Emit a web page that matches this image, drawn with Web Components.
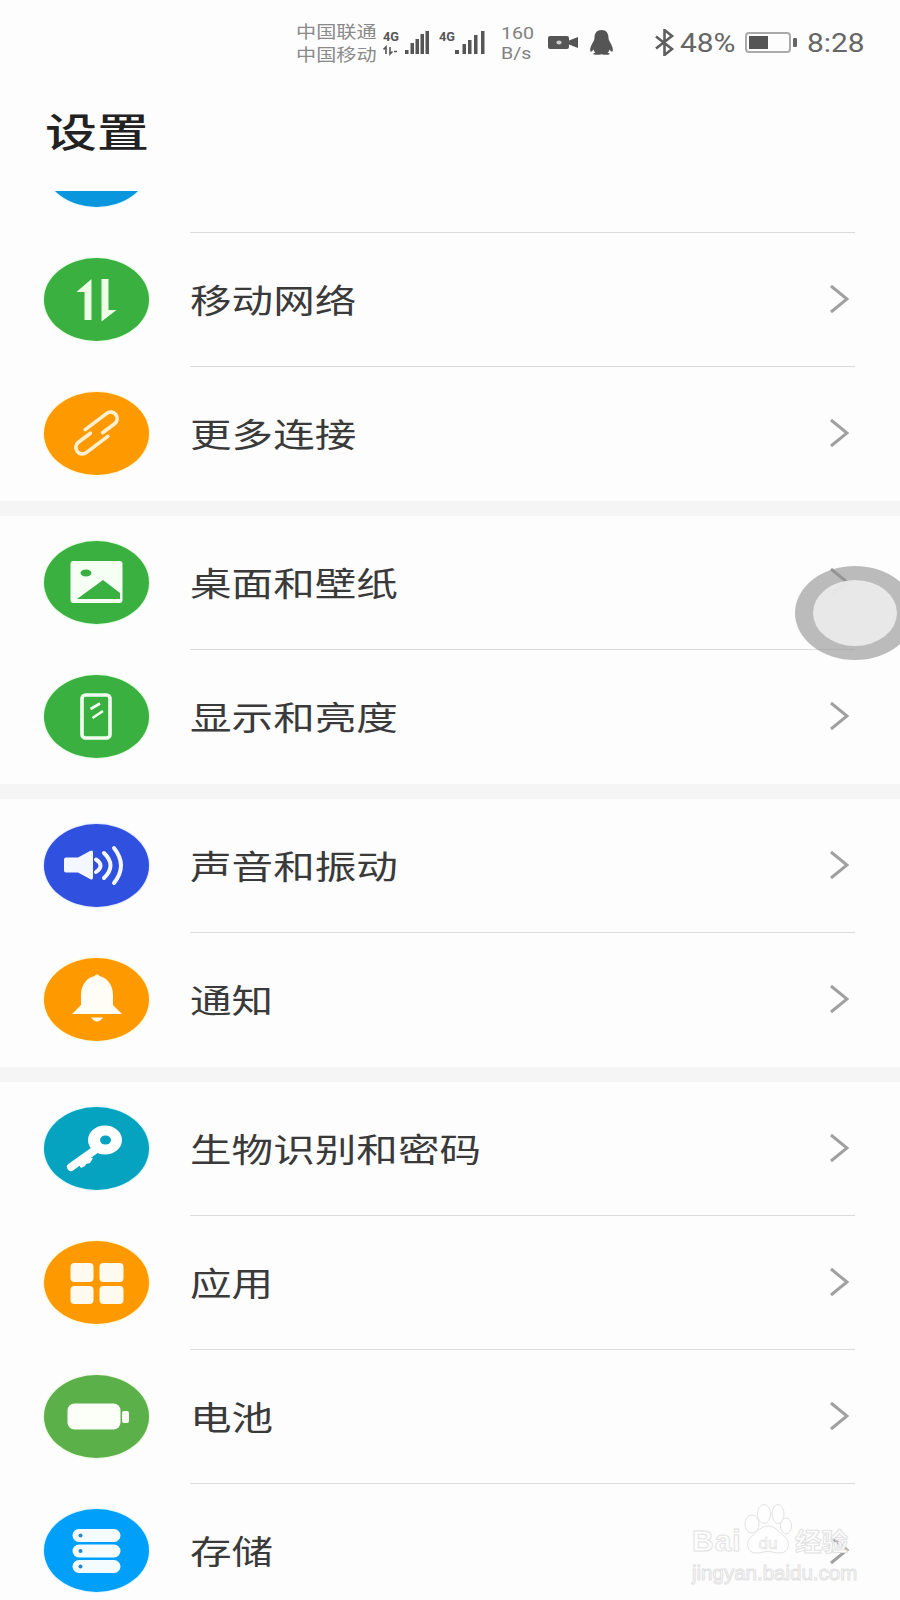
<!DOCTYPE html>
<html lang="zh">
<head>
<meta charset="utf-8">
<title>设置</title>
<style>
html, body { margin: 0; padding: 0; }
body {
    width: 900px;
    height: 1600px;
    overflow: hidden;
    position: relative;
    background: #fdfdfd;
    font-family: "Noto Sans CJK SC", "Noto Sans", sans-serif;
}
</style>
</head>
<body>

<status-bar></status-bar>
<title-bar>设置</title-bar>

<setting-list>
    <setting-group>
        <setting-row color="#0a96dc" halo="#9adfff" clipped></setting-row>
        <setting-row color="#39b040" halo="#b0f8a8">
            <svg slot="icon" width="105" height="83" viewBox="0 0 105 83" fill="#ecffe6">
                <path d="M47.5 21V62H40.5V34H32.5Z"/>
                <path d="M57.5 21H64.5V52H72.5L57.5 63.5Z"/>
            </svg>
            移动网络
        </setting-row>
        <setting-row color="#fe9a00" halo="#ffe680" last>
            <svg slot="icon" width="105" height="83" viewBox="0 0 105 83" fill="none" stroke="#fff0d2" stroke-width="3.6" stroke-linecap="round">
                <g transform="translate(52.5 41) rotate(-37)">
                    <path d="M-7 -9.5H20A6.5 6.5 0 0 1 20 3.5H5"/>
                    <path d="M7 9.5H-20A6.5 6.5 0 0 1 -20 -3.5H-5"/>
                </g>
            </svg>
            更多连接
        </setting-row>
    </setting-group>

    <setting-group>
        <setting-row color="#39b040" halo="#b0f8a8">
            <svg slot="icon" width="105" height="83" viewBox="0 0 105 83">
                <rect x="26.5" y="20" width="52" height="42" rx="3" fill="#f6fff4"/>
                <ellipse cx="42" cy="32" rx="5.5" ry="3.5" fill="#39b040"/>
                <path d="M33 58L59 39L76 52V58Z" fill="#39b040"/>
            </svg>
            桌面和壁纸
        </setting-row>
        <setting-row color="#39b040" halo="#b0f8a8" last>
            <svg slot="icon" width="105" height="83" viewBox="0 0 105 83" fill="none" stroke="#f2fff0">
                <rect x="38" y="20" width="28" height="43" rx="3.5" stroke-width="3.6"/>
                <path d="M46.5 34L56 28.5M48.5 43L59 36" stroke-width="2.6"/>
            </svg>
            显示和亮度
        </setting-row>
    </setting-group>

    <setting-group>
        <setting-row color="#3050e0" halo="#a8c0ff">
            <svg slot="icon" width="105" height="83" viewBox="0 0 105 83" fill="none" stroke="#f4f7ff">
                <path d="M22 33.5H34L46 27Q49 25.5 49 28.5V53.5Q49 56.5 46 55L34 48.5H22Q20 48.5 20 46.5V35.5Q20 33.5 22 33.5Z" fill="#f4f7ff" stroke="none"/>
                <path d="M52 35.5Q61 41.5 52 48M60 29Q73 41.5 60 54M70 24Q84 41.5 70 59" stroke-width="4" stroke-linecap="round"/>
            </svg>
            声音和振动
        </setting-row>
        <setting-row color="#fe9a00" halo="#ffe680" last>
            <svg slot="icon" width="105" height="83" viewBox="0 0 105 83" fill="#fffdf6">
                <circle cx="53" cy="19" r="2.5"/>
                <path d="M53 18C62 18 69 26 69 37V47L78 56H28L37 47V37C37 26 44 18 53 18Z"/>
                <path d="M47 59.5H59Q56 63.5 53 63.5Q50 63.5 47 59.5Z"/>
            </svg>
            通知
        </setting-row>
    </setting-group>

    <setting-group>
        <setting-row color="#05a3c0" halo="#9af0ff">
            <svg slot="icon" width="105" height="83" viewBox="0 0 105 83">
                <path d="M27 60L51 43" stroke="#fff" stroke-width="8" stroke-linecap="round"/>
                <path d="M35 58L37 61L41 59L42 57L46 56L49 51L43 50Z" fill="#fff"/>
                <ellipse cx="61" cy="33" rx="17" ry="14.5" fill="#fff"/>
                <ellipse cx="61.5" cy="33" rx="5.5" ry="4.5" fill="#05a3c0"/>
            </svg>
            生物识别和密码
        </setting-row>
        <setting-row color="#fe9a00" halo="#ffe680">
            <svg slot="icon" width="105" height="83" viewBox="0 0 105 83" fill="#fffaf0">
                <rect x="26.5" y="22" width="23" height="19" rx="4"/>
                <rect x="55.5" y="22" width="24" height="19" rx="4"/>
                <rect x="26.5" y="45" width="23" height="18" rx="4"/>
                <rect x="55.5" y="45" width="24" height="18" rx="4"/>
            </svg>
            应用
        </setting-row>
        <setting-row color="#5bb04a" halo="#c0f0a0">
            <svg slot="icon" width="105" height="83" viewBox="0 0 105 83" fill="#fbfff8">
                <rect x="23.5" y="28.5" width="53" height="26" rx="7"/>
                <rect x="78" y="36" width="7" height="12" rx="2"/>
            </svg>
            电池
        </setting-row>
        <setting-row color="#00a0fa" halo="#9ae8ff" last>
            <svg slot="icon" width="105" height="83" viewBox="0 0 105 83">
                <g fill="#f4fcff">
                    <rect x="28.5" y="20" width="48" height="13" rx="6.5"/>
                    <rect x="28.5" y="35.5" width="48" height="13" rx="6.5"/>
                    <rect x="28.5" y="51" width="48" height="13" rx="6.5"/>
                </g>
                <g fill="#2a86c8">
                    <circle cx="36.5" cy="26.5" r="2"/>
                    <circle cx="36.5" cy="42" r="2"/>
                    <circle cx="36.5" cy="57.5" r="2"/>
                </g>
            </svg>
            存储
        </setting-row>
    </setting-group>
</setting-list>

<floating-ball></floating-ball>
<baidu-mark></baidu-mark>

<script>
// status bar along the top
var template_status = document.createElement("template");
template_status.innerHTML = `
<style>
:host { display: flex; align-items: center; height: 85px; padding-left: 296px; color: #666; font-family: Roboto, "Noto Sans CJK SC", sans-serif; }
svg { display: block; flex: none; }
.wide { display: block; transform-origin: left center; white-space: nowrap; }
.two { flex: none; display: flex; flex-direction: column; }
.carrier { width: 81px; font: 16.5px/23px "Noto Sans CJK SC", sans-serif; color: #8a8a8a; }
.carrier .wide { transform: scaleX(1.22); }
.speed { width: 33px; margin-left: 15px; font-size: 17px; line-height: 20px; color: #808080; }
.speed .wide { transform: scaleX(1.15); }
.sig1 { margin-left: 6px; }
.sig2 { margin-left: 9px; }
.cam { margin-left: 14px; }
.qq { margin-left: 10px; }
.bt { margin-left: 39px; }
.pct { flex: none; width: 55px; margin-left: 5px; font-size: 26px; }
.pct .wide, .time .wide { transform: scaleX(1.15); }
.batt { margin-left: 10px; }
.time { flex: none; width: 58px; margin-left: 10px; font-size: 26px; }
</style>
<div class="two carrier"><span class="wide">中国联通</span><span class="wide">中国移动</span></div>
<svg class="sig1" width="47" height="26" viewBox="0 0 47 26" fill="#555">
    <text x="0" y="11" font-family="Roboto, sans-serif" font-size="12.5" font-weight="700" textLength="16" lengthAdjust="spacingAndGlyphs">4G</text>
    <path d="M3 24V17L.5 19.5M7 17V24L9.5 21.5M11 21.5H14" fill="none" stroke="#555" stroke-width="1.6"/>
    <rect x="22" y="20" width="3.5" height="4"/>
    <rect x="27.5" y="13" width="3.5" height="11"/>
    <rect x="32.5" y="9" width="3.5" height="15"/>
    <rect x="37.5" y="4" width="3.5" height="20"/>
    <rect x="42.5" y="1" width="3.5" height="23"/>
</svg>
<svg class="sig2" width="47" height="26" viewBox="0 0 47 26" fill="#555">
    <text x="0" y="11" font-family="Roboto, sans-serif" font-size="12.5" font-weight="700" textLength="16" lengthAdjust="spacingAndGlyphs">4G</text>
    <rect x="16" y="20" width="4" height="4"/>
    <rect x="23.5" y="14" width="3.5" height="10"/>
    <rect x="29" y="10" width="3.5" height="14"/>
    <rect x="35" y="5" width="3.5" height="19"/>
    <rect x="42" y="1" width="3.5" height="23"/>
</svg>
<div class="two speed"><span class="wide">160</span><span class="wide">B/s</span></div>
<svg class="cam" width="30" height="13" viewBox="0 0 30 13">
    <path d="M2 0H19Q21 0 21 2V4.5L30 1V12L21 8.5V11Q21 13 19 13H2Q0 13 0 11V2Q0 0 2 0Z" fill="#555"/>
    <ellipse cx="11" cy="6.5" rx="2.6" ry="2" fill="#ccc"/>
</svg>
<svg class="qq" width="27" height="25" viewBox="0 0 27 25">
    <path d="M13.5 0C8.5 0 6.5 3.5 6.5 8C6.5 10 5 12 4 14C2.5 17 1.5 20 2.5 21.5C3.5 22 4.5 21 5.5 19.5C6 21 6.5 22 7.5 22.5C5.5 23 4.5 24 6 24.5C8 25 11 25 13.5 24.2C16 25 19 25 21 24.5C22.5 24 21.5 23 19.5 22.5C20.5 22 21 21 21.5 19.5C22.5 21 23.5 22 24.5 21.5C25.5 20 24.5 17 23 14C22 12 20.5 10 20.5 8C20.5 3.5 18.5 0 13.5 0Z" fill="#555"/>
</svg>
<svg class="bt" width="21" height="27" viewBox="0 0 21 27" fill="none" stroke="#5f5f5f" stroke-width="2.6">
    <path d="M2 7.5L18 20L10.5 26V1L18 7L2 19.5"/>
</svg>
<div class="pct"><span class="wide">48%</span></div>
<svg class="batt" width="52" height="21" viewBox="0 0 52 21">
    <rect x="1" y="1" width="44" height="19" rx="3" fill="none" stroke="#aaa" stroke-width="2"/>
    <rect x="4" y="4" width="19" height="13" fill="#555"/>
    <rect x="48" y="6" width="4" height="9" rx="1" fill="#666"/>
</svg>
<div class="time"><span class="wide">8:28</span></div>
`;
class StatusBar extends HTMLElement {
    constructor(){
        super();
        this.attachShadow({mode:"open"});
    }
    connectedCallback(){
        this.shadowRoot.appendChild(template_status.content.cloneNode(true));
    }
}
customElements.define("status-bar", StatusBar);

// big page title
var template_title = document.createElement("template");
template_title.innerHTML = `
<style>
:host { display: flex; align-items: center; height: 90px; padding: 0 0 16px 45px; }
span { display: block; font-size: 40px; font-weight: 500; color: #222; transform: scaleX(1.3); transform-origin: left center; }
</style>
<span><slot></slot></span>
`;
class TitleBar extends HTMLElement {
    constructor(){
        super();
        this.attachShadow({mode:"open"});
    }
    connectedCallback(){
        this.shadowRoot.appendChild(template_title.content.cloneNode(true));
    }
}
customElements.define("title-bar", TitleBar);

// scrolled area, first row is cut off under the title
var template_list = document.createElement("template");
template_list.innerHTML = `
<style>
:host { display: block; height: 1409px; overflow: hidden; }
div { margin-top: -92.5px; }
</style>
<div><slot></slot></div>
`;
class SettingList extends HTMLElement {
    constructor(){
        super();
        this.attachShadow({mode:"open"});
    }
    connectedCallback(){
        this.shadowRoot.appendChild(template_list.content.cloneNode(true));
    }
}
customElements.define("setting-list", SettingList);

var template_group = document.createElement("template");
template_group.innerHTML = `
<style>
:host { display: block; border-bottom: 15px solid #f5f5f5; }
</style>
<slot></slot>
`;
class SettingGroup extends HTMLElement {
    constructor(){
        super();
        this.attachShadow({mode:"open"});
    }
    connectedCallback(){
        this.shadowRoot.appendChild(template_group.content.cloneNode(true));
    }
}
customElements.define("setting-group", SettingGroup);

// one row: coloured oval, label, chevron
var template_row = document.createElement("template");
template_row.innerHTML = `
<style>
:host { display: flex; align-items: stretch; height: 134px; padding-left: 44px; font-size: 33px; color: #3a3a3a; }
.icon { flex: none; align-self: center; width: 105px; height: 83px; border-radius: 50%; background: var(--oval); box-shadow: 0 0 2px var(--halo); }
.icon ::slotted(svg) { display: block; }
.body { flex: 1; display: flex; align-items: center; justify-content: space-between; margin: 0 45px 0 41px; padding-right: 6px; border-bottom: 1px solid #dcdcdc; }
:host([last]) .body { border-bottom-color: transparent; }
.label { display: block; white-space: nowrap; transform: scaleX(1.26); transform-origin: left center; }
svg.chev { display: block; }
:host([clipped]) svg.chev { display: none; }
</style>
<div class="icon"><slot name="icon"></slot></div>
<div class="body">
    <span class="label"><slot></slot></span>
    <svg class="chev" width="20" height="30" viewBox="0 0 20 30" fill="none" stroke="#a0a0a0" stroke-width="3">
        <path d="M2 2L18 15L2 28"/>
    </svg>
</div>
`;
class SettingRow extends HTMLElement {
    constructor(){
        super();
        this.attachShadow({mode:"open"});
    }
    connectedCallback(){
        this.shadowRoot.appendChild(template_row.content.cloneNode(true));
        this.style.setProperty("--oval", this.getAttribute("color"));
        this.style.setProperty("--halo", this.getAttribute("halo"));
    }
}
customElements.define("setting-row", SettingRow);

// assistive touch ball floating over the list
var template_ball = document.createElement("template");
template_ball.innerHTML = `
<style>
:host { display: flex; align-items: center; justify-content: center; position: absolute; left: 795px; top: 566px; width: 120px; height: 94px; border-radius: 50%; background: rgba(140,140,140,.58); }
div { width: 84px; height: 66px; border-radius: 50%; background: rgba(234,234,234,.95); }
</style>
<div></div>
`;
class FloatingBall extends HTMLElement {
    constructor(){
        super();
        this.attachShadow({mode:"open"});
    }
    connectedCallback(){
        this.shadowRoot.appendChild(template_ball.content.cloneNode(true));
    }
}
customElements.define("floating-ball", FloatingBall);

// outlined watermark, bottom right
var template_mark = document.createElement("template");
template_mark.innerHTML = `
<style>
:host { display: flex; flex-direction: column; position: absolute; left: 692px; top: 1504px; width: 160px; font-family: "Liberation Sans", sans-serif; color: #fefefe; -webkit-text-stroke: 1px #e2e2e2; }
.top { display: flex; align-items: flex-end; height: 50px; }
.bai { flex: none; width: 51px; font-size: 30px; font-weight: 700; line-height: 26px; letter-spacing: 1px; white-space: nowrap; }
svg { display: block; flex: none; }
.cn { flex: none; margin-left: 3px; font: 700 25px/28px "Noto Sans CJK SC", sans-serif; transform: scaleX(1.06); transform-origin: left center; white-space: nowrap; }
.url { font-size: 20.5px; line-height: 24px; margin-top: 7px; white-space: nowrap; }
</style>
<div class="top">
    <span class="bai">Bai</span>
    <svg width="49" height="50" viewBox="0 0 49 50" fill="#fefefe" stroke="#e2e2e2">
        <ellipse cx="9" cy="20" rx="7" ry="9"/>
        <ellipse cx="21" cy="10" rx="6.5" ry="9.5"/>
        <ellipse cx="35" cy="10" rx="6" ry="9.5"/>
        <ellipse cx="43" cy="22" rx="5.5" ry="8"/>
        <path d="M25 22C32 22 36 28 42 33C48 39 46 49 37 49C32 49 30 47.5 25 47.5C20 47.5 18 49 13 49C4 49 2 39 8 33C14 28 18 22 25 22Z"/>
        <text x="25" y="45" text-anchor="middle" font-family="Liberation Sans, sans-serif" font-size="17" font-weight="400" stroke-width=".7">du</text>
    </svg>
    <span class="cn">经验</span>
</div>
<span class="url">jingyan.baidu.com</span>
`;
class BaiduMark extends HTMLElement {
    constructor(){
        super();
        this.attachShadow({mode:"open"});
    }
    connectedCallback(){
        this.shadowRoot.appendChild(template_mark.content.cloneNode(true));
    }
}
customElements.define("baidu-mark", BaiduMark);
</script>
</body>
</html>
